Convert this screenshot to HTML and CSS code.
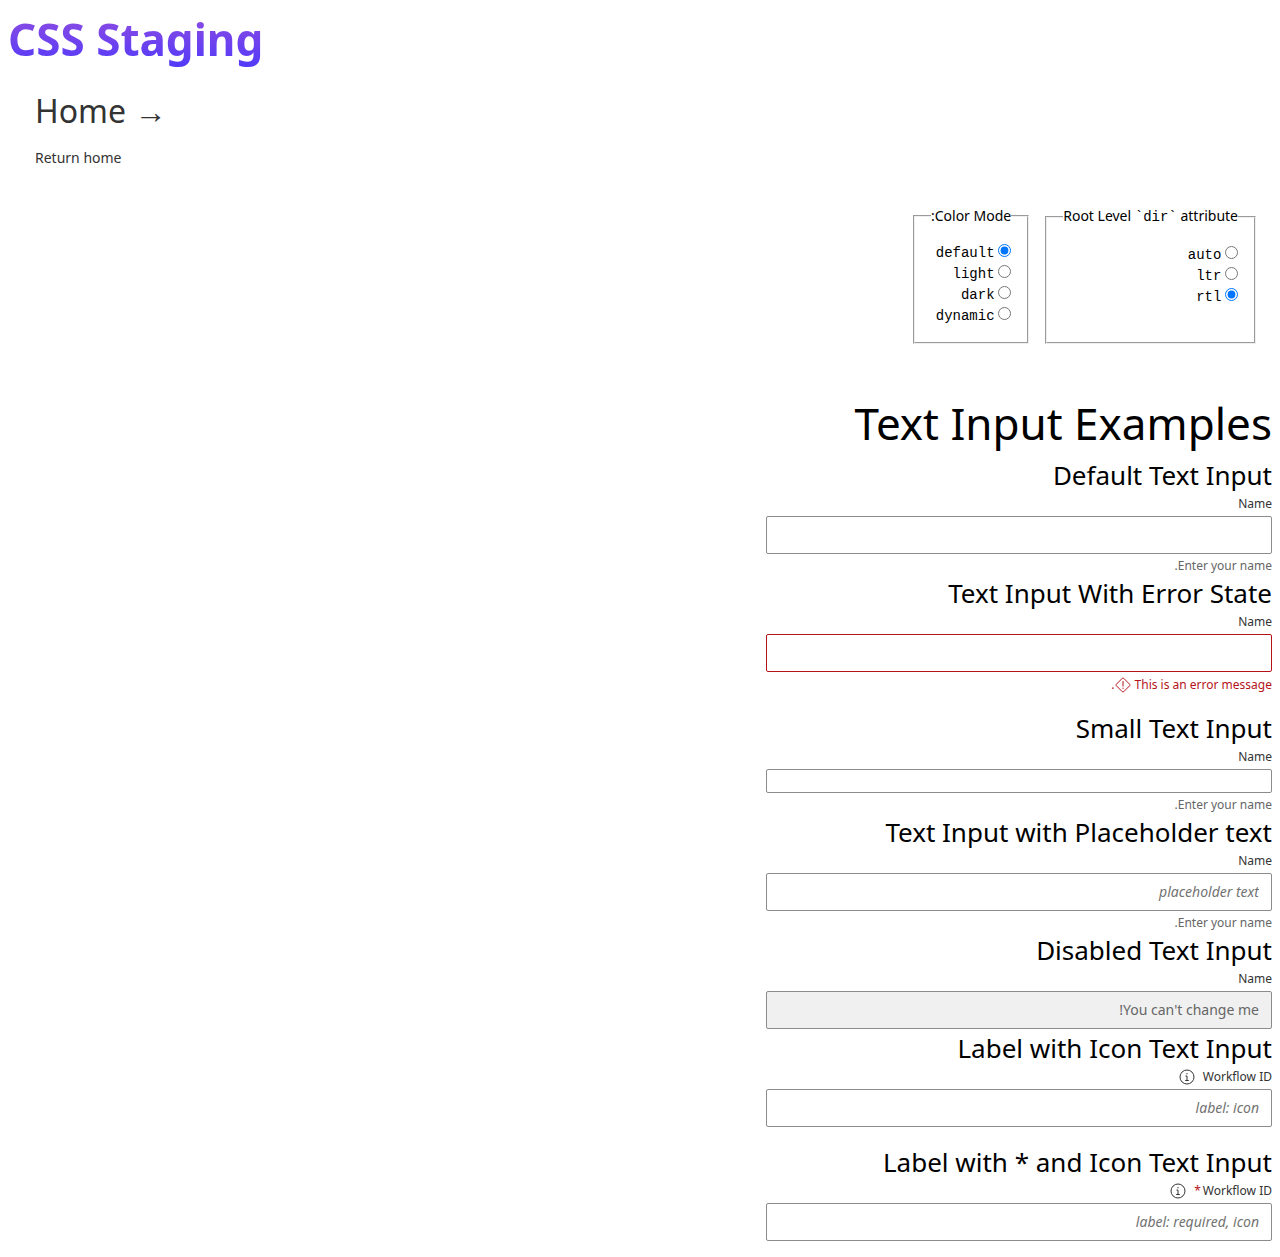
FILE: index.html
```
<!DOCTYPE html>
<html lang="en" dir="rtl">
<head>
<meta charset="utf-8">
<meta name="viewport" content="width=device-width, initial-scale=1">
<title>CSS Staging</title>
<link rel="stylesheet" href="styles.css">
</head>
<body>
<header class="site-header" dir="ltr">
  <h1 class="site-title"><span class="text-gradient">CSS Staging</span></h1>
  <a class="home-link" href="/">
    <span class="home-title">Home <span class="arrow">→</span></span>
    <span class="home-text">Return home</span>
  </a>
</header>

<form class="settings">
  <fieldset class="options">
    <legend>Root Level <code>`dir`</code> attribute</legend>
    <label class="option"><input type="radio" name="dir" value="auto"> <code>auto</code></label>
    <label class="option"><input type="radio" name="dir" value="ltr"> <code>ltr</code></label>
    <label class="option"><input type="radio" name="dir" value="rtl" checked> <code>rtl</code></label>
  </fieldset>
  <fieldset class="options">
    <legend>Color Mode:</legend>
    <label class="option"><input type="radio" name="mode" value="default" checked> <code>default</code></label>
    <label class="option"><input type="radio" name="mode" value="light"> <code>light</code></label>
    <label class="option"><input type="radio" name="mode" value="dark"> <code>dark</code></label>
    <label class="option"><input type="radio" name="mode" value="dynamic"> <code>dynamic</code></label>
  </fieldset>
</form>

<main>
  <h2 class="page-heading">Text Input Examples</h2>

  <section class="field">
    <h3 class="field-heading">Default Text Input</h3>
    <label class="label" for="name-default">Name</label>
    <input class="input" id="name-default" type="text">
    <p class="help">Enter your name.</p>
  </section>

  <section class="field field-spaced">
    <h3 class="field-heading">Text Input With Error State</h3>
    <label class="label" for="name-error">Name</label>
    <input class="input input-error" id="name-error" type="text" aria-invalid="true" aria-describedby="error-text">
    <p class="help help-error" id="error-text"><span>This is an error message</span><svg class="icon icon-error" viewBox="0 0 16 16" aria-hidden="true"><path d="M7.3 1.3 1.3 7.3a1 1 0 0 0 0 1.4l6 6a1 1 0 0 0 1.4 0l6-6a1 1 0 0 0 0-1.4l-6-6a1 1 0 0 0-1.4 0zM8 4v5.500M8 10.700v1.200"/></svg><span>.</span></p>
  </section>

  <section class="field">
    <h3 class="field-heading">Small Text Input</h3>
    <label class="label" for="name-small">Name</label>
    <input class="input input-small" id="name-small" type="text">
    <p class="help">Enter your name.</p>
  </section>

  <section class="field">
    <h3 class="field-heading">Text Input with Placeholder text</h3>
    <label class="label" for="name-placeholder">Name</label>
    <input class="input" id="name-placeholder" type="text" placeholder="placeholder text">
    <p class="help">Enter your name.</p>
  </section>

  <section class="field">
    <h3 class="field-heading">Disabled Text Input</h3>
    <label class="label" for="name-disabled">Name</label>
    <input class="input" id="name-disabled" type="text" value="You can't change me!" disabled>
  </section>

  <section class="field field-spaced">
    <h3 class="field-heading">Label with Icon Text Input</h3>
    <label class="label" for="workflow">Workflow ID<svg class="icon icon-info" viewBox="0 0 16 16" aria-hidden="true"><path d="M8 1a7 7 0 1 0 0 14A7 7 0 0 0 8 1zM6.500 7H8v4.500M6.200 11.500h3.600M8 4v1.300"/></svg></label>
    <input class="input" id="workflow" type="text" placeholder="label: icon">
  </section>

  <section class="field">
    <h3 class="field-heading">Label with * and Icon Text Input</h3>
    <label class="label" for="workflow-required">Workflow ID<span class="required">*</span><svg class="icon icon-info" viewBox="0 0 16 16" aria-hidden="true"><path d="M8 1a7 7 0 1 0 0 14A7 7 0 0 0 8 1zM6.500 7H8v4.500M6.200 11.500h3.600M8 4v1.300"/></svg></label>
    <input class="input" id="workflow-required" type="text" placeholder="label: required, icon">
  </section>
</main>
</body>
</html>
```
FILE: styles.css
```
* { box-sizing: border-box; }

body {
  margin: 8px;
  font-family: "Noto Sans", sans-serif;
  font-size: 14px;
  line-height: 21px;
  color: #000;
  background: #fff;
}

h1, h2, h3, p { margin: 0; font-weight: 400; }

code { font-family: "Liberation Mono", monospace; font-size: 14px; }

.site-title { font-size: 44px; font-weight: 700; line-height: 62px; }

.text-gradient {
  color: transparent;
  background-image: linear-gradient(0deg, #4f39fa, #da62c4);
  background-size: 100% 200%;
  background-position: 0 100%;
  background-clip: text;
}

.home-link {
  display: flex;
  flex-direction: column;
  gap: 14px;
  padding: 19px 27px 17px;
  color: #333;
  text-decoration: none;
}

.home-title { font-size: 32px; line-height: 44px; }

.settings {
  display: flex;
  gap: 16px;
  padding: 20px 16px 46px;
}

.options {
  display: flex;
  flex-direction: column;
  margin: 0;
  padding: 15px 16px 17px;
  border: 2px groove ThreeDFace;
}

.options legend { padding: 0; }

.option { display: block; height: 21px; }

.option input { margin: 0; }

.page-heading { font-size: 44px; line-height: 66px; }

.field {
  display: flex;
  flex-direction: column;
  align-items: flex-start;
}

.field-spaced { margin-bottom: 16px; }

.field-heading { margin-bottom: 2px; font-size: 26px; line-height: 38px; }

.label {
  display: flex;
  align-items: center;
  height: 16px;
  font-size: 12px;
  line-height: 16px;
  color: #333;
}

.required { margin-inline-start: 2px; color: #b41319; }

.input {
  width: 40%;
  height: 38px;
  margin-top: 4px;
  padding: 0 12px 2px;
  border: 1px solid #8c8c8c;
  border-radius: 2px;
  background: #fff;
  font: inherit;
  color: #333;
}

.input-small { height: 24px; }

.input-error { border-color: #b41319; }

.input::placeholder { font-style: italic; color: #737373; }

.input:disabled { background: #f0f0f0; color: #666; }

.help {
  margin-top: 4px;
  font-size: 12px;
  line-height: 16px;
  color: #666;
}

.help-error {
  display: flex;
  align-items: center;
  line-height: 17px;
  color: #b41319;
}

.icon {
  width: 16px;
  height: 16px;
  fill: none;
  stroke: currentColor;
}

.icon-error { margin-inline-start: 4px; }

.icon-info { margin-inline-start: 8px; }
```
